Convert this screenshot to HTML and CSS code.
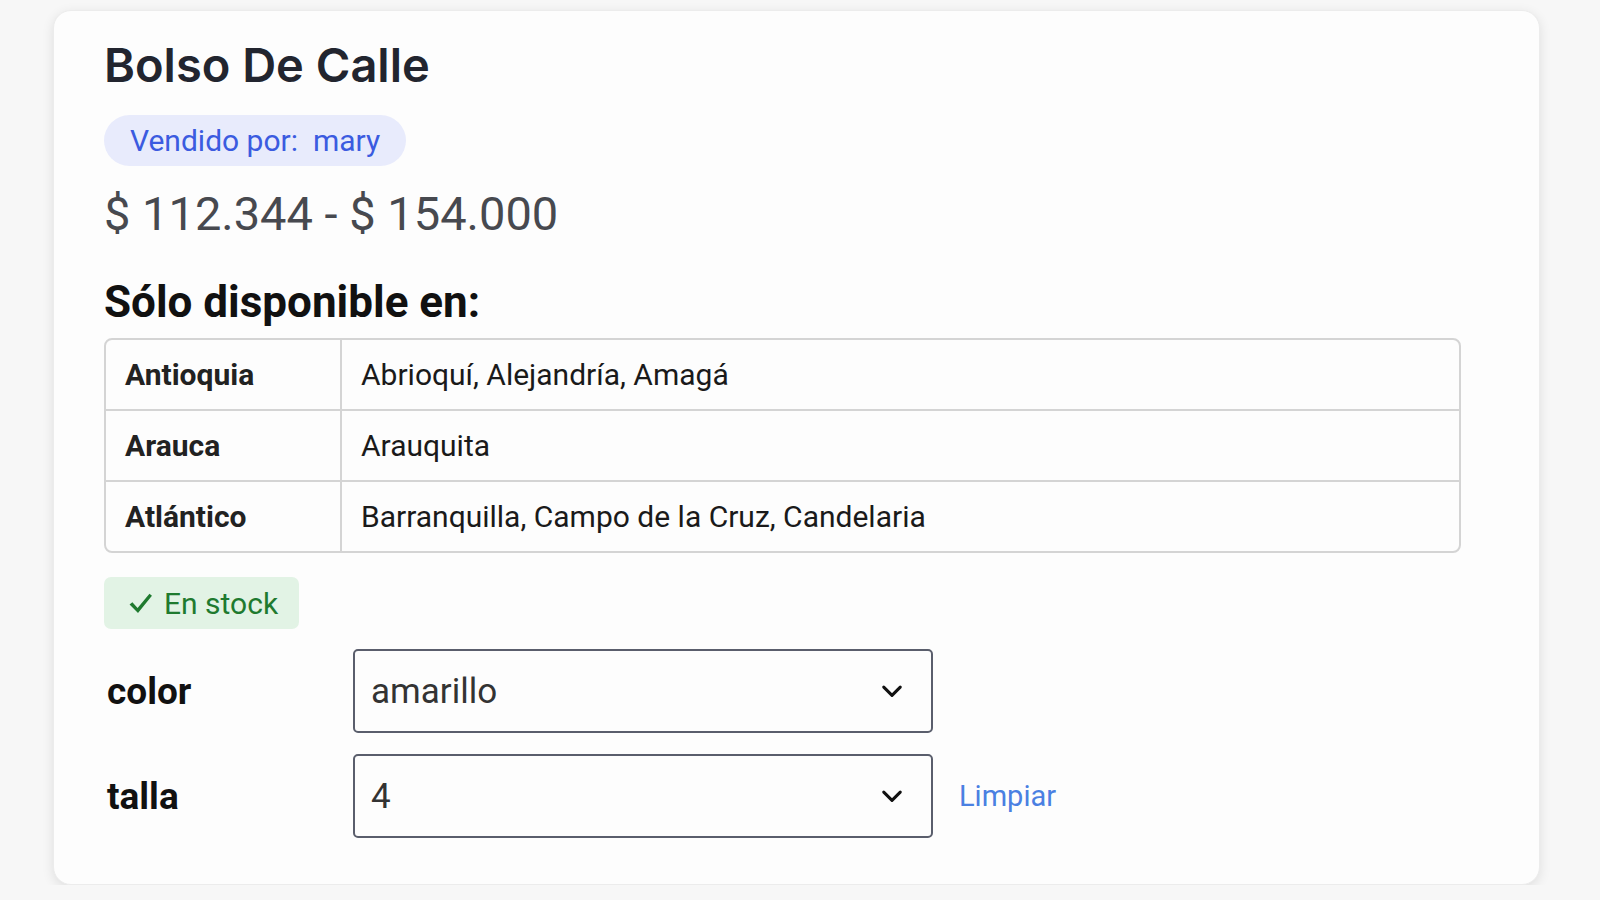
FILE: index.html
```html
<!DOCTYPE html>
<html lang="es">
<head>
    <meta charset="UTF-8">
    <meta name="viewport" content="width=device-width, initial-scale=1.0">
    <title>Bolso De Calle</title>
    <link rel="stylesheet" href="styles.css">
</head>
<body>
    <div class="product-card">
        <h1 class="product-title">Bolso De Calle</h1>
        <div class="seller">Vendido por:&nbsp; mary</div>
        <p class="price">$ 112.344 - $ 154.000</p>

        <h2 class="zones-title">Sólo disponible en:</h2>
        <div class="zones">
            <table>
                <tr>
                    <th>Antioquia</th>
                    <td>Abrioquí, Alejandría, Amagá</td>
                </tr>
                <tr>
                    <th>Arauca</th>
                    <td>Arauquita</td>
                </tr>
                <tr>
                    <th>Atlántico</th>
                    <td>Barranquilla, Campo de la Cruz, Candelaria</td>
                </tr>
            </table>
        </div>

        <div class="stock">
            <svg class="stock-icon" viewBox="0 0 24 24" width="25" height="25">
                <path d="M1.5 13 L4.2 10.8 L9.2 16.4 L20.6 2.6 L23 4.6 L9.6 21.2 Z" fill="currentColor"/>
            </svg>
            En stock
        </div>

        <div class="variations">
            <div class="variation-row">
                <label class="variation-label">color</label>
                <div class="select">
                    <span>amarillo</span>
                    <svg class="chevron" viewBox="0 0 20 20" width="22" height="22">
                        <path d="M2.5 6.5 L10 14 L17.5 6.5" fill="none" stroke="currentColor" stroke-width="2.8" stroke-linecap="round" stroke-linejoin="round"/>
                    </svg>
                </div>
            </div>
            <div class="variation-row">
                <label class="variation-label">talla</label>
                <div class="select">
                    <span>4</span>
                    <svg class="chevron" viewBox="0 0 20 20" width="22" height="22">
                        <path d="M2.5 6.5 L10 14 L17.5 6.5" fill="none" stroke="currentColor" stroke-width="2.8" stroke-linecap="round" stroke-linejoin="round"/>
                    </svg>
                </div>
                <a href="#" class="reset">Limpiar</a>
            </div>
        </div>
    </div>
</body>
</html>
```

FILE: styles.css
```css
body {
    margin: 0;
    padding: 10px 0 0 53px;
    font-family: Roboto, "Liberation Sans", sans-serif;
    background-color: #f7f7f7;
    color: #222;
}

.product-card {
    width: 1487px;
    box-sizing: border-box;
    background: #fdfdfd;
    border: 1px solid #ececec;
    border-radius: 18px;
    padding: 26px 48px 46px 50px;
    box-shadow: 0 3px 12px rgba(0, 0, 0, 0.1);
}

.product-title {
    margin: 0;
    font-family: Inter, Roboto, sans-serif;
    font-size: 47px;
    font-weight: 600;
    line-height: 56px;
    color: #22252f;
}

.seller {
    width: fit-content;
    margin-top: 22px;
    padding: 0 26px;
    height: 51px;
    line-height: 51px;
    border-radius: 26px;
    background-color: #e8ebfc;
    color: #3b5be0;
    font-size: 30px;
}

.price {
    margin: 20px 0 0;
    font-size: 47px;
    line-height: 56px;
    color: #47494f;
}

.zones-title {
    margin: 35px 0 0;
    font-size: 44px;
    font-weight: 700;
    line-height: 50px;
    color: #111;
}

.zones {
    margin-top: 11px;
    width: 1357px;
    border: 2px solid #d4d4d4;
    border-radius: 8px;
    overflow: hidden;
    box-sizing: border-box;
}

.zones table {
    width: 100%;
    border-collapse: collapse;
    font-size: 30px;
}

.zones th,
.zones td {
    height: 69px;
    padding: 0 19px;
    text-align: left;
    border-top: 2px solid #d4d4d4;
}

.zones tr:first-child th,
.zones tr:first-child td {
    border-top: none;
}

.zones th {
    width: 196px;
    font-weight: 700;
    border-right: 2px solid #d4d4d4;
}

.zones td {
    font-weight: 400;
    color: #1a1a1a;
}

.stock {
    display: flex;
    align-items: center;
    gap: 11px;
    width: fit-content;
    margin-top: 24px;
    height: 52px;
    padding: 0 21px 0 24px;
    border-radius: 7px;
    background-color: #e2f3e5;
    color: #1f7a2f;
    font-size: 30px;
}

.variations {
    margin-top: 20px;
    display: flex;
    flex-direction: column;
    gap: 21px;
}

.variation-row {
    display: flex;
    align-items: center;
}

.variation-label {
    width: 249px;
    padding-left: 3px;
    box-sizing: border-box;
    font-size: 37px;
    font-weight: 700;
    color: #111;
}

.select {
    display: flex;
    align-items: center;
    justify-content: space-between;
    width: 580px;
    height: 84px;
    box-sizing: border-box;
    padding: 0 28px 0 16px;
    border: 2px solid #5a5e6c;
    border-radius: 5px;
    background: #fdfdfd;
    font-size: 35px;
    color: #333;
}

.chevron {
    color: #111;
}

.reset {
    margin-left: 26px;
    font-size: 29px;
    color: #4a80e2;
    text-decoration: none;
}
```
